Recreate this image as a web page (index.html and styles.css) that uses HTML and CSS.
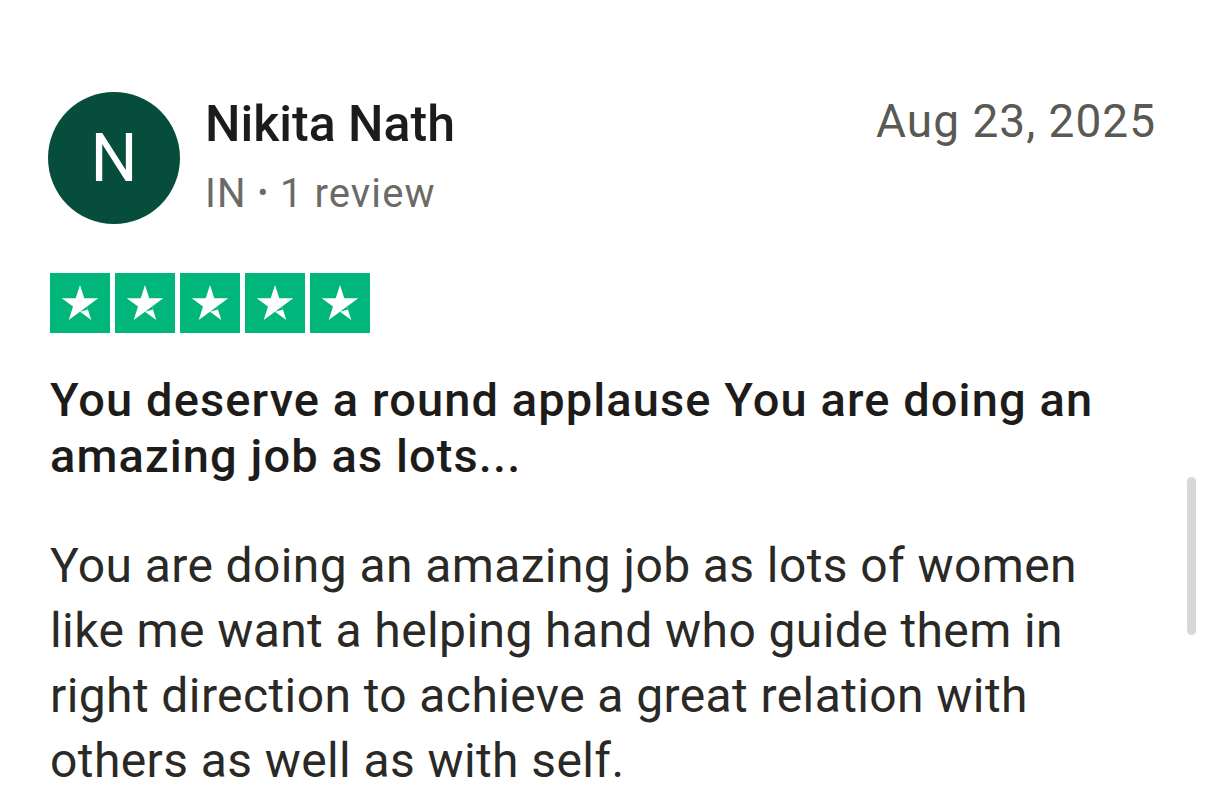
FILE: index.html
```html
<!DOCTYPE html>
<html>
<head>
<meta charset="utf-8">
<link rel="stylesheet" href="styles.css">
</head>
<body>
<div class="card">
  <div class="header">
    <div class="avatar">N</div>
    <div class="who">
      <div class="name">Nikita Nath</div>
      <div class="meta">IN <span class="dot">•</span> 1 review</div>
    </div>
    <div class="date">Aug 23, 2025</div>
  </div>
  <div class="stars">
    <div class="star"><svg viewBox="0 0 60 60"><path d="M30 12 L34.3 25.3 L48.3 25.3 L37 33.5 L41.3 47 L30 38.7 L18.7 47 L23 33.5 L11.7 25.3 L25.7 25.3 Z" fill="#fff"/><path d="M37 33.5 L38 36.5 L30 38.7 Z" fill="#00b67a"/></svg></div>
    <div class="star"><svg viewBox="0 0 60 60"><path d="M30 12 L34.3 25.3 L48.3 25.3 L37 33.5 L41.3 47 L30 38.7 L18.7 47 L23 33.5 L11.7 25.3 L25.7 25.3 Z" fill="#fff"/><path d="M37 33.5 L38 36.5 L30 38.7 Z" fill="#00b67a"/></svg></div>
    <div class="star"><svg viewBox="0 0 60 60"><path d="M30 12 L34.3 25.3 L48.3 25.3 L37 33.5 L41.3 47 L30 38.7 L18.7 47 L23 33.5 L11.7 25.3 L25.7 25.3 Z" fill="#fff"/><path d="M37 33.5 L38 36.5 L30 38.7 Z" fill="#00b67a"/></svg></div>
    <div class="star"><svg viewBox="0 0 60 60"><path d="M30 12 L34.3 25.3 L48.3 25.3 L37 33.5 L41.3 47 L30 38.7 L18.7 47 L23 33.5 L11.7 25.3 L25.7 25.3 Z" fill="#fff"/><path d="M37 33.5 L38 36.5 L30 38.7 Z" fill="#00b67a"/></svg></div>
    <div class="star"><svg viewBox="0 0 60 60"><path d="M30 12 L34.3 25.3 L48.3 25.3 L37 33.5 L41.3 47 L30 38.7 L18.7 47 L23 33.5 L11.7 25.3 L25.7 25.3 Z" fill="#fff"/><path d="M37 33.5 L38 36.5 L30 38.7 Z" fill="#00b67a"/></svg></div>
  </div>
  <h2 class="title">You deserve a round applause You are doing an amazing job as lots...</h2>
  <p class="text">You are doing an amazing job as lots of women like me want a helping hand who guide them in right direction to achieve a great relation with others as well as with self.</p>
</div>
<div class="scrollbar"></div>
</body>
</html>
```
FILE: styles.css
```css
html, body {
  margin: 0;
  padding: 0;
  background: #fff;
  width: 1206px;
  height: 804px;
  overflow: hidden;
}
body {
  font-family: Roboto, "Liberation Sans", sans-serif;
  color: #2a2926;
}
.card {
  padding: 92px 50px 0 48px;
}
.header {
  display: flex;
  align-items: flex-start;
}
.avatar {
  width: 132px;
  height: 132px;
  border-radius: 50%;
  background: #064d3c;
  color: #fff;
  font-size: 66px;
  font-weight: 400;
  display: flex;
  align-items: center;
  justify-content: center;
  flex: none;
}
.who {
  margin-left: 25px;
  flex: 1;
  padding-top: 4px;
}
.name {
  font-size: 50px;
  font-weight: 500;
  line-height: 56px;
  color: #1d1c1a;
}
.meta {
  font-size: 40px;
  line-height: 50px;
  margin-top: 16px;
  color: #6b6a66;
  letter-spacing: 1.1px;
}
.dot {
  font-size: 30px;
  vertical-align: 4px;
}
.date {
  font-size: 46px;
  line-height: 56px;
  color: #5a5954;
  padding-top: 1px;
  letter-spacing: 1px;
}
.stars {
  display: flex;
  gap: 5px;
  margin-top: 49px;
  margin-left: 2px;
}
.star {
  width: 60px;
  height: 60px;
  background: #00b67a;
}
.star svg {
  display: block;
  width: 60px;
  height: 60px;
}
.title {
  margin: 39px 0 0 2px;
  font-size: 47px;
  font-weight: 500;
  line-height: 56px;
  color: #1d1c1a;
  letter-spacing: 1.1px;
  width: 1110px;
}
.text {
  margin: 49px 0 0 2px;
  font-size: 48px;
  font-weight: 400;
  line-height: 65px;
  color: #2a2926;
  letter-spacing: 0.4px;
  width: 1080px;
}
.scrollbar {
  position: absolute;
  left: 1187px;
  top: 477px;
  width: 9px;
  height: 158px;
  border-radius: 5px;
  background: #d8d8d8;
}
```
